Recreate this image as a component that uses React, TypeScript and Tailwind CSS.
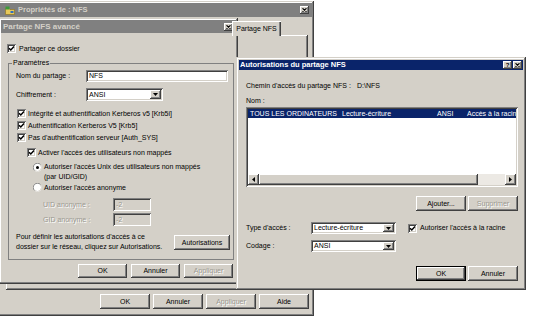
const raised =
  "shadow-[inset_-1px_-1px_#404040,inset_1px_1px_#ffffff,inset_-2px_-2px_#808080]";
const defaultBtn =
  "shadow-[inset_0_0_0_1px_#000000,inset_-2px_-2px_#404040,inset_2px_2px_#ffffff,inset_-3px_-3px_#808080]";
const sunken =
  "shadow-[inset_1px_1px_#808080,inset_-1px_-1px_#ffffff,inset_2px_2px_#404040,inset_-2px_-2px_#d4d0c8]";
const frame =
  "shadow-[inset_-1px_-1px_#404040,inset_1px_1px_#d4d0c8,inset_-2px_-2px_#808080,inset_2px_2px_#ffffff]";
const disabledText = "text-[#9a9890] [text-shadow:1px_1px_0_#ffffff]";

function Btn({
  label,
  className = "",
  disabled = false,
  isDefault = false,
}: {
  label: string;
  className?: string;
  disabled?: boolean;
  isDefault?: boolean;
}) {
  return (
    <div
      className={`flex shrink-0 items-center justify-center bg-[#d4d0c8] ${isDefault ? defaultBtn : raised} ${disabled ? disabledText : "text-black"} ${className}`}
    >
      {label}
    </div>
  );
}

function Check({ checked = true }: { checked?: boolean }) {
  return (
    <span className={`flex h-[9px] w-[9px] shrink-0 items-center justify-center bg-white ${sunken}`}>
      {checked ? (
        <svg width="7" height="7" viewBox="0 0 7 7">
          <path d="M1 3.2 L2.8 5 L6 1.6" stroke="#000" strokeWidth="1.5" fill="none" />
        </svg>
      ) : null}
    </span>
  );
}

function Radio({ on = false }: { on?: boolean }) {
  return (
    <svg width="9" height="9" viewBox="0 0 12 12" className="shrink-0">
      <circle cx="6" cy="6" r="5.5" fill="#ffffff" />
      <path d="M10 2 A5.5 5.5 0 0 0 2 10" stroke="#808080" strokeWidth="1.2" fill="none" />
      <path d="M2.4 9.6 A5 5 0 0 0 9.6 2.4" stroke="#d4d0c8" strokeWidth="1" fill="none" />
      {on ? <circle cx="6" cy="6" r="2" fill="#000" /> : null}
    </svg>
  );
}

function Select({ value, className = "" }: { value: string; className?: string }) {
  return (
    <div className={`flex shrink-0 items-stretch bg-white p-[2px] ${sunken} ${className}`}>
      <span className="flex flex-1 items-center overflow-hidden whitespace-nowrap pl-[1px]">{value}</span>
      <span className={`flex w-[11px] items-center justify-center bg-[#d4d0c8] ${raised}`}>
        <svg width="5" height="3" viewBox="0 0 5 3">
          <path d="M0 0H5L2.5 3Z" fill="#000" />
        </svg>
      </span>
    </div>
  );
}

function CloseBox() {
  return (
    <span className={`flex h-[8px] w-[9px] shrink-0 items-center justify-center bg-[#d4d0c8] ${raised}`}>
      <svg width="5" height="4" viewBox="0 0 5 4">
        <path d="M0.5 0.3 L4.5 3.7 M4.5 0.3 L0.5 3.7" stroke="#000" strokeWidth="1.1" />
      </svg>
    </span>
  );
}

function HelpBox() {
  return (
    <span
      className={`flex h-[8px] w-[9px] shrink-0 items-center justify-center bg-[#d4d0c8] text-[6px] font-bold leading-[8px] ${raised}`}
    >
      ?
    </span>
  );
}

function ShareIcon() {
  return (
    <svg width="10" height="9" viewBox="0 0 10 9" className="shrink-0">
      <path d="M0.5 2.5 H4 L5 3.5 H9.5 V8.5 H0.5 Z" fill="#e8c95a" stroke="#8a6d1c" strokeWidth="0.6" />
      <rect x="0.5" y="0.5" width="4" height="3" fill="#3c9a3c" />
      <rect x="5.5" y="5" width="3" height="2" fill="#2f6fbf" />
    </svg>
  );
}

export default function App() {
  return (
    <div className="relative h-[326px] w-[540px] overflow-hidden bg-white font-['Liberation_Sans',Arial,sans-serif] text-[7px] leading-[10px] text-black">
      {/* Propriétés de : NFS */}
      <div className={`absolute left-[-2px] top-[1px] flex h-[315px] w-[316px] flex-col bg-[#d4d0c8] p-[2px] ${frame}`}>
        <div className="flex h-[14px] shrink-0 items-center bg-[#808080] pl-[5px] pr-[3px]">
          <ShareIcon />
          <span className="ml-[3px] flex-1 text-[7.5px] font-bold text-[#d4d0c8]">Propriétés de : NFS</span>
          <CloseBox />
        </div>
        <div className="mt-[4px] flex pl-[232px]">
          <div className="relative z-10 -mb-px flex h-[15px] w-[49px] items-center justify-center bg-[#d4d0c8] shadow-[inset_1px_1px_#ffffff,inset_-1px_0_#404040,inset_-2px_0_#808080]">
            Partage NFS
          </div>
        </div>
        <div className={`ml-[6px] h-[255px] w-[302px] shrink-0 bg-[#d4d0c8] ${raised}`} />
        <div className="mt-[4px] flex justify-end gap-[3px] pr-[3px]">
          <Btn label="OK" className="h-[15px] w-[50px]" />
          <Btn label="Annuler" className="h-[15px] w-[50px]" />
          <Btn label="Appliquer" className="h-[15px] w-[50px]" disabled />
          <Btn label="Aide" className="h-[15px] w-[50px]" />
        </div>
      </div>

      {/* Partage NFS avancé */}
      <div className={`absolute left-[-1px] top-[18px] flex h-[266px] w-[239px] flex-col bg-[#d4d0c8] p-[2px] ${frame}`}>
        <div className="flex h-[13px] shrink-0 items-center bg-[#808080] pl-[2px] pr-[3px]">
          <span className="flex-1 text-[8px] font-bold text-[#d4d0c8]">Partage NFS avancé</span>
          <CloseBox />
        </div>
        <div className="mt-[11px] flex h-[9px] items-center gap-[3px] pl-[6px]">
          <Check />
          <span>Partager ce dossier</span>
        </div>
        <fieldset className="ml-[7px] mr-[2px] mt-[5px] border border-[#808080] pb-[7px] pl-[7px] pr-[3px]">
          <legend className="-ml-[4px] px-[1px]">Paramètres</legend>
          <div className="mt-[2px] flex h-[12px] items-center">
            <span className="w-[70px]">Nom du partage :</span>
            <div className={`flex h-[12px] w-[142px] items-center bg-white pl-[3px] ${sunken}`}>NFS</div>
          </div>
          <div className="mt-[6px] flex h-[13px] items-center">
            <span className="w-[70px]">Chiffrement :</span>
            <Select value="ANSI" className="h-[13px] w-[77px]" />
          </div>
          <div className="mt-[8px] flex h-[9px] items-center gap-[2px] pl-[1px]">
            <Check />
            <span>Intégrité et authentification Kerberos v5 [Krb5i]</span>
          </div>
          <div className="mt-[3px] flex h-[9px] items-center gap-[2px] pl-[1px]">
            <Check />
            <span>Authentification Kerberos V5 [Krb5]</span>
          </div>
          <div className="mt-[3px] flex h-[9px] items-center gap-[2px] pl-[1px]">
            <Check />
            <span>Pas d'authentification serveur [Auth_SYS]</span>
          </div>
          <div className="mt-[6px] flex h-[9px] items-center gap-[2px] pl-[11px]">
            <Check />
            <span>Activer l'accès des utilisateurs non mappés</span>
          </div>
          <div className="mt-[5px] flex items-start gap-[2px] pl-[17px]">
            <span className="mt-[1px]">
              <Radio on />
            </span>
            <span>
              Autoriser l'accès Unix des utilisateurs non mappés
              <br />
              (par UID/GID)
            </span>
          </div>
          <div className="mt-[1px] flex h-[9px] items-center gap-[2px] pl-[17px]">
            <Radio />
            <span>Autoriser l'accès anonyme</span>
          </div>
          <div className="mt-[6px] flex h-[13px] items-center pl-[27px]">
            <span className={`w-[70px] ${disabledText}`}>UID anonyme :</span>
            <div className={`flex h-[13px] w-[38px] items-center bg-[#d4d0c8] pl-[3px] ${sunken} ${disabledText}`}>-2</div>
          </div>
          <div className="mt-[2px] flex h-[13px] items-center pl-[27px]">
            <span className={`w-[70px] ${disabledText}`}>GID anonyme :</span>
            <div className={`flex h-[13px] w-[38px] items-center bg-[#d4d0c8] pl-[3px] ${sunken} ${disabledText}`}>-2</div>
          </div>
          <div className="mt-[6px] flex items-start justify-between">
            <p>
              Pour définir les autorisations d'accès à ce
              <br />
              dossier sur le réseau, cliquez sur Autorisations.
            </p>
            <Btn label="Autorisations" className="mt-[3px] h-[15px] w-[56px]" />
          </div>
        </fieldset>
        <div className="mt-[4px] flex justify-end gap-[4px] pr-[3px]">
          <Btn label="OK" className="h-[14px] w-[49px]" />
          <Btn label="Annuler" className="h-[14px] w-[49px]" />
          <Btn label="Appliquer" className="h-[14px] w-[49px]" disabled />
        </div>
      </div>

      {/* Autorisations du partage NFS */}
      <div className={`absolute left-[236px] top-[57px] flex h-[233px] w-[290px] flex-col bg-[#d4d0c8] p-[3px] ${frame}`}>
        <div className="flex h-[10px] shrink-0 items-center gap-[1px] bg-[#0a246a] pl-[1px] pr-[1px]">
          <span className="flex-1 text-[7.5px] font-bold text-white">Autorisations du partage NFS</span>
          <HelpBox />
          <CloseBox />
        </div>
        <div className="flex flex-col pl-[7px] pr-[5px]">
          <div className="mt-[11px] flex">
            <span className="w-[111px]">Chemin d'accès du partage NFS :</span>
            <span>D:\NFS</span>
          </div>
          <div className="mt-[5px]">Nom :</div>
          <div className={`mt-[1px] flex h-[80px] w-[272px] flex-col bg-white p-[2px] ${sunken}`}>
            <div className="flex h-[9px] items-center overflow-hidden whitespace-nowrap bg-[#0a246a] text-white">
              <span className="w-[94px] shrink-0 pl-[2px]">TOUS LES ORDINATEURS</span>
              <span className="w-[95px] shrink-0">Lecture-écriture</span>
              <span className="w-[30px] shrink-0">ANSI</span>
              <span className="shrink-0">Accès à la racine</span>
            </div>
            <div className="flex-1" />
            <div className="flex h-[11px] bg-[#ece9e4]">
              <span className={`flex w-[11px] items-center justify-center bg-[#d4d0c8] ${raised}`}>
                <svg width="3" height="5" viewBox="0 0 3 5">
                  <path d="M3 0V5L0 2.5Z" fill="#000" />
                </svg>
              </span>
              <span className={`w-[219px] bg-[#d4d0c8] ${raised}`} />
              <span className="flex-1" />
              <span className={`flex w-[11px] items-center justify-center bg-[#d4d0c8] ${raised}`}>
                <svg width="3" height="5" viewBox="0 0 3 5">
                  <path d="M0 0V5L3 2.5Z" fill="#000" />
                </svg>
              </span>
            </div>
          </div>
          <div className="mt-[9px] flex justify-end gap-[2px]">
            <Btn label="Ajouter..." className="h-[15px] w-[50px]" />
            <Btn label="Supprimer" className="h-[15px] w-[50px]" disabled />
          </div>
          <div className="mt-[11px] flex h-[12px] items-center">
            <span className="w-[65px]">Type d'accès :</span>
            <Select value="Lecture-écriture" className="h-[12px] w-[85px]" />
            <span className="ml-[12px]">
              <Check />
            </span>
            <span className="ml-[3px]">Autoriser l'accès à la racine</span>
          </div>
          <div className="mt-[6px] flex h-[12px] items-center">
            <span className="w-[65px]">Codage :</span>
            <Select value="ANSI" className="h-[12px] w-[85px]" />
          </div>
          <div className="mt-[14px] flex justify-end gap-[2px]">
            <Btn label="OK" className="h-[15px] w-[50px]" isDefault />
            <Btn label="Annuler" className="h-[15px] w-[50px]" />
          </div>
        </div>
      </div>
    </div>
  );
}
